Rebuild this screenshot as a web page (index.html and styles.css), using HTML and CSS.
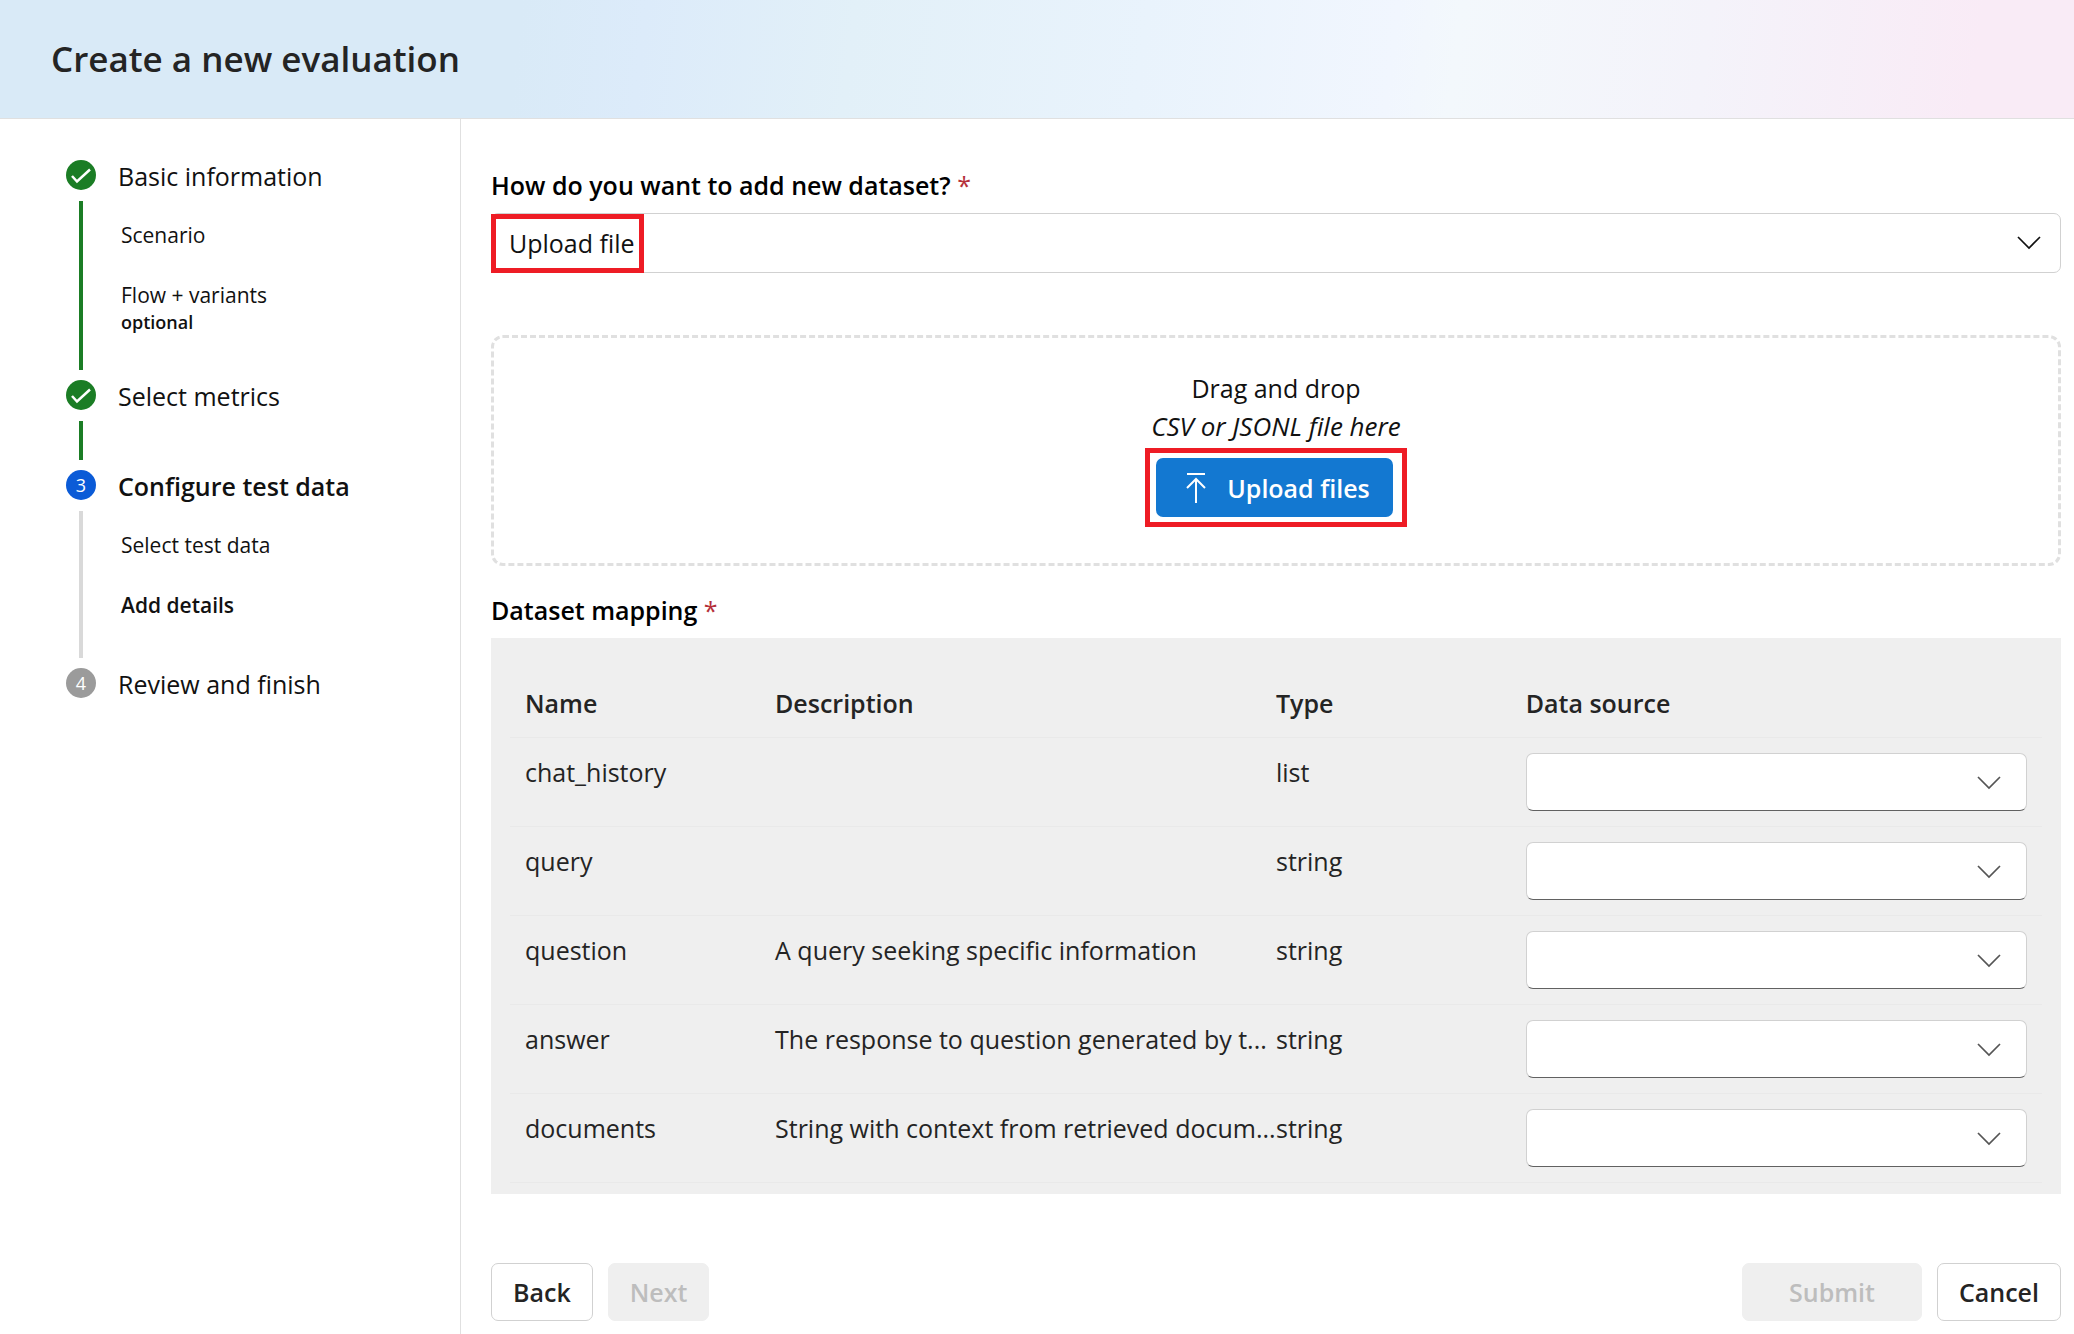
FILE: index.html
```html
<!DOCTYPE html>
<html lang="en">
<head>
  <meta charset="UTF-8" />
  <meta name="viewport" content="width=device-width, initial-scale=1.0" />
  <title>Create a new evaluation</title>
  <link rel="stylesheet" href="styles.css">
</head>
<body>
  <header class="header">
    <h1>Create a new evaluation</h1>
  </header>

  <div class="layout">
    <nav class="sidebar">
      <ol class="steps">
        <li class="step done">
          <div class="marker">
            <span class="circle">
              <svg width="30" height="30" viewBox="0 0 30 30"><path d="M6 16l5 5.500L24 9.500" /></svg>
            </span>
            <span class="line"></span>
          </div>
          <div class="step-body">
            <div class="step-title">Basic information</div>
            <ul class="substeps">
              <li>Scenario</li>
              <li>Flow + variants<small>optional</small></li>
            </ul>
          </div>
        </li>
        <li class="step done">
          <div class="marker">
            <span class="circle">
              <svg width="30" height="30" viewBox="0 0 30 30"><path d="M6 16l5 5.500L24 9.500" /></svg>
            </span>
            <span class="line"></span>
          </div>
          <div class="step-body">
            <div class="step-title">Select metrics</div>
          </div>
        </li>
        <li class="step current">
          <div class="marker">
            <span class="circle">3</span>
            <span class="line"></span>
          </div>
          <div class="step-body">
            <div class="step-title">Configure test data</div>
            <ul class="substeps">
              <li>Select test data</li>
              <li class="active">Add details</li>
            </ul>
          </div>
        </li>
        <li class="step">
          <div class="marker">
            <span class="circle">4</span>
          </div>
          <div class="step-body">
            <div class="step-title">Review and finish</div>
          </div>
        </li>
      </ol>
    </nav>

    <main class="content">
      <label class="field-label" for="addDataset">How do you want to add new dataset? <span class="required">*</span></label>
      <div class="select-box main-select">
        <select id="addDataset">
          <option>Upload file</option>
        </select>
        <svg class="chevron" width="24" height="14" viewBox="0 0 24 14"><path d="M1 1l11 11L23 1" /></svg>
        <span class="highlight"></span>
      </div>

      <div class="dropzone">
        <p>Drag and drop</p>
        <p><em>CSV or JSONL file here</em></p>
        <div class="upload-frame">
          <button type="button" class="btn-upload">
            <svg width="20" height="32" viewBox="0 0 20 32"><path d="M1 2h18M10 31V7M1 16l9-9 9 9" /></svg>
            Upload files
          </button>
        </div>
      </div>

      <h2 class="field-label">Dataset mapping <span class="required">*</span></h2>
      <div class="mapping">
        <table>
          <thead>
            <tr>
              <th class="col-name">Name</th>
              <th class="col-desc">Description</th>
              <th class="col-type">Type</th>
              <th class="col-source">Data source</th>
            </tr>
          </thead>
          <tbody id="mappingRows"></tbody>
        </table>
      </div>

      <footer class="actions">
        <button type="button" class="btn">Back</button>
        <button type="button" class="btn" disabled>Next</button>
        <button type="button" class="btn btn-submit" disabled>Submit</button>
        <button type="button" class="btn">Cancel</button>
      </footer>
    </main>
  </div>

  <script>
    const fields = [
      { name: "chat_history", description: "", type: "list" },
      { name: "query", description: "", type: "string" },
      { name: "question", description: "A query seeking specific information", type: "string" },
      { name: "answer", description: "The response to question generated by t...", type: "string" },
      { name: "documents", description: "String with context from retrieved docum...", type: "string" }
    ];

    const rows = document.getElementById("mappingRows");
    fields.forEach(field => {
      const tr = document.createElement("tr");
      tr.innerHTML = `
        <td><label for="source_${field.name}">${field.name}</label></td>
        <td>${field.description}</td>
        <td>${field.type}</td>
        <td>
          <div class="select-box">
            <select id="source_${field.name}"><option></option></select>
            <svg class="chevron" width="24" height="14" viewBox="0 0 24 14"><path d="M1 1l11 11L23 1" /></svg>
          </div>
        </td>`;
      rows.appendChild(tr);
    });
  </script>
</body>
</html>
```
FILE: styles.css
```css
* {
  box-sizing: border-box;
}

body {
  margin: 0;
  min-height: 100vh;
  display: flex;
  flex-direction: column;
  font-family: "Open Sans", "Noto Sans", sans-serif;
  font-size: 25px;
  line-height: 38px;
  color: #111;
  background-color: #fff;
}

h1, h2, p, ul, ol {
  margin: 0;
  padding: 0;
}

ul, ol {
  list-style: none;
}

.header {
  padding: 34px 51px;
  border-bottom: 1px solid #e0e0e0;
  background: linear-gradient(97deg, #d9eaf7 0%, #d9eaf7 25%, #dcebfa 31%, #e2f0f8 41%, #e9f3fc 55%, #f1f6fe 67%, #f3f8fc 70%, #f4f3fa 82%, #f9ebf6 95%);
}

.header h1 {
  font-size: 35px;
  line-height: 50px;
  font-weight: 600;
  color: #242424;
}

.layout {
  display: flex;
  flex: 1;
}

/* steps */

.sidebar {
  width: 461px;
  flex-shrink: 0;
  padding: 41px 20px 0 66px;
  border-right: 1px solid #e0e0e0;
}

.step {
  display: flex;
  gap: 22px;
}

.marker {
  display: flex;
  flex-direction: column;
  align-items: center;
  flex-shrink: 0;
}

.circle {
  width: 30px;
  height: 30px;
  border-radius: 50%;
  background-color: #9b9b9b;
  color: #fff;
  font-size: 18px;
  line-height: 30px;
  text-align: center;
}

.circle svg {
  display: block;
  fill: none;
  stroke: #fff;
  stroke-width: 2.5;
}

.line {
  flex: 1;
  width: 4px;
  margin: 11px 0 10px;
  background-color: #d9d9d9;
}

.done .circle,
.done .line {
  background-color: #1b7d25;
}

.current .circle {
  background-color: #0b5bd7;
}

.current .step-title,
.substeps .active {
  font-weight: 600;
}

.step-title {
  line-height: 32px;
  padding-bottom: 58px;
}

.step-title:has(+ .substeps) {
  padding-bottom: 13px;
}

.substeps {
  padding-left: 3px;
  padding-bottom: 33px;
  font-size: 21px;
  line-height: 32px;
}

.substeps li {
  padding: 14px 0;
}

.substeps small {
  display: block;
  font-size: 18px;
  line-height: 22px;
  font-weight: 600;
}

/* form */

.content {
  flex: 1;
  min-width: 0;
  padding: 47px 13px 13px 30px;
}

.field-label {
  display: block;
  font-size: 25px;
  line-height: 38px;
  font-weight: 600;
  color: #000;
}

.required {
  color: #b5303a;
  font-weight: 400;
}

.select-box {
  position: relative;
}

.select-box select {
  display: block;
  width: 100%;
  height: 58px;
  padding: 0 60px 0 17px;
  appearance: none;
  font: inherit;
  color: inherit;
  background-color: #fff;
  border: 1px solid #d1d1d1;
  border-bottom-color: #616161;
  border-radius: 7px;
}

.chevron {
  position: absolute;
  right: 26px;
  top: 23px;
  fill: none;
  stroke: #555;
  stroke-width: 1.7;
  pointer-events: none;
}

.main-select {
  margin-top: 9px;
}

.main-select select {
  height: 60px;
  border-color: #d1d1d1;
}

.main-select .chevron {
  right: 20px;
  stroke: #111;
}

.highlight {
  position: absolute;
  left: 0;
  top: 1px;
  bottom: 0;
  width: 153px;
  border: 5px solid #ee1c25;
  pointer-events: none;
}

.dropzone {
  display: flex;
  flex-direction: column;
  align-items: center;
  margin: 62px 0 25px;
  padding: 31px 0 36px;
  border: 3px dashed #e0e0e0;
  border-radius: 12px;
}

.dropzone em {
  font-size: 26px;
}

.upload-frame {
  margin-top: 3px;
  padding: 5px 9px 5px 6px;
  border: 5px solid #ee1c25;
}

.btn-upload {
  display: flex;
  align-items: center;
  gap: 21px;
  height: 59px;
  padding: 0 23px 0 30px;
  border: none;
  border-radius: 7px;
  background-color: #1378d1;
  color: #fff;
  font: inherit;
  font-weight: 600;
}

.btn-upload svg {
  fill: none;
  stroke: #fff;
  stroke-width: 2;
}

/* mapping table */

.mapping {
  margin-top: 9px;
  padding: 33px 19px 11px;
  background-color: #efefef;
}

.mapping table {
  width: 100%;
  table-layout: fixed;
  border-collapse: separate;
  border-spacing: 0;
  color: #242424;
}

.mapping th {
  height: 67px;
  padding: 0 0 3px;
  text-align: left;
  font-weight: 600;
}

.mapping td {
  height: 89px;
  padding: 15px 0 0;
  vertical-align: top;
  white-space: nowrap;
}

.mapping th,
.mapping td {
  border-bottom: 1px solid #e9e9e9;
}

.mapping th:first-child,
.mapping td:first-child {
  padding-left: 15px;
}

.mapping td:last-child {
  padding-right: 15px;
}

.col-name {
  width: 17.3%;
}

.col-desc {
  width: 32.7%;
}

.col-type {
  width: 16.3%;
}

/* footer buttons */

.actions {
  display: flex;
  gap: 15px;
  margin-top: 69px;
}

.btn {
  height: 58px;
  padding: 0 21px;
  border: 1px solid #d1d1d1;
  border-radius: 7px;
  background-color: #fff;
  color: #242424;
  font: inherit;
  font-weight: 600;
}

.btn:disabled {
  border-color: #efefef;
  background-color: #efefef;
  color: #bdbdbd;
}

.btn-submit {
  width: 180px;
  margin-left: auto;
}
```
